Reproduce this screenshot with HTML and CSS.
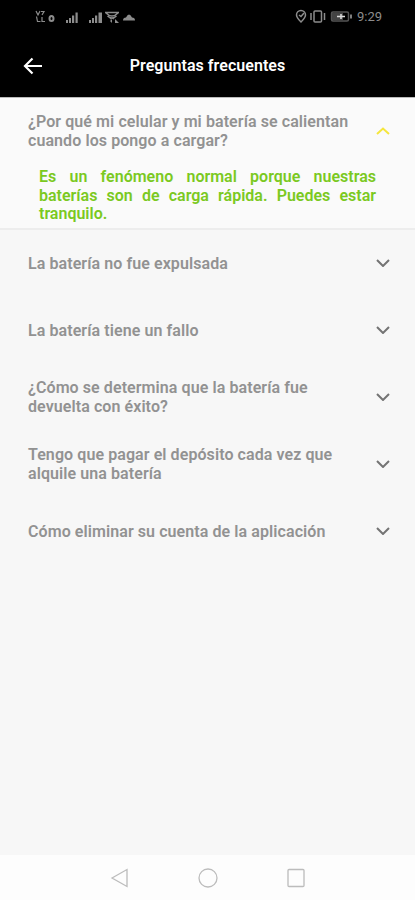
FILE: index.html
```html
<!DOCTYPE html>
<html lang="es">
<head>
<meta charset="utf-8">
<title>Preguntas frecuentes</title>
<link rel="stylesheet" href="styles.css">
</head>
<body>
<div class="status">
  <svg class="status-left" width="102" height="18" viewBox="0 0 102 18" fill="#8c8c8c">
    <g fill="none" stroke="#8c8c8c" stroke-width="1.2">
      <path d="M2 3l2 4 2-4M7 3.500h3L8 7M2.500 8.500l1 5h3M8 9v4.500h3"/>
      <ellipse cx="17.500" cy="10.500" rx="2" ry="2.500" stroke-width="2"/>
      <path d="M71 4.500h14M72 5q6 6 12 0M73.500 8q4.500 4 9 0M76 11q2-2 4 0" stroke-width="1.400"/>
    </g>
    <path d="M32 12h2v3h-2zM35 10h2v5h-2zM38 7.500h2.200V15H38zM41.500 4.500h2.200V15h-2.200z"/>
    <path d="M55 12h2v3h-2zM58 10h2v5h-2zM61 7.500h2.200V15H61zM64.500 4.500h3.500V15h-3.500z"/>
    <path d="M76 13l2-2v4zM81 11l4 4h-4zM89 12.500q0-3 3-3 3-6 6 0 3 0 3 3z"/>
  </svg>
  <div class="status-right">
    <svg width="58" height="18" viewBox="0 0 58 18" fill="none" stroke="#8c8c8c" stroke-width="1.500">
      <path d="M6 14C3 11 1.500 9 1.500 7a4.500 4.500 0 0 1 9 0c0 2-1.500 4-4.500 7z"/>
      <path d="M4 7l2 1.500L9 5"/>
      <rect x="19" y="3" width="7.500" height="11" rx="1"/>
      <path d="M16 5v7M29.500 5v7"/>
      <rect x="36.500" y="4" width="17" height="9" rx="1.500" stroke="#555"/>
      <path d="M37 5h11v7H37z" fill="#444" stroke="none"/>
      <path d="M56 6.500v4" stroke-width="1.800"/>
      <path d="M42 8.500h8M46 6v5" stroke="#ddd"/>
    </svg>
    <span class="time">9:29</span>
  </div>
</div>
<header class="bar">
  <svg class="back" width="20" height="18" viewBox="0 0 20 18"><path d="M19 9H2M9.500 1.500L2 9l7.500 7.500"/></svg>
  <h1>Preguntas frecuentes</h1>
</header>
<main>
  <section class="open">
    <div class="row">
      <p>¿Por qué mi celular y mi batería se calientan cuando los pongo a cargar?</p>
      <svg class="chev up" width="14" height="8" viewBox="0 0 14 8"><path d="M1 7l6-5.500L13 7"/></svg>
    </div>
    <p class="answer">Es un fenómeno normal porque nuestras baterías son de carga rápida. Puedes estar tranquilo.</p>
  </section>
  <div class="row"><p>La batería no fue expulsada</p><svg class="chev" width="14" height="8" viewBox="0 0 14 8"><path d="M1 1l6 6 6-6"/></svg></div>
  <div class="row"><p>La batería tiene un fallo</p><svg class="chev" width="14" height="8" viewBox="0 0 14 8"><path d="M1 1l6 6 6-6"/></svg></div>
  <div class="row"><p>¿Cómo se determina que la batería fue devuelta con éxito?</p><svg class="chev" width="14" height="8" viewBox="0 0 14 8"><path d="M1 1l6 6 6-6"/></svg></div>
  <div class="row"><p>Tengo que pagar el depósito cada vez que alquile una batería</p><svg class="chev" width="14" height="8" viewBox="0 0 14 8"><path d="M1 1l6 6 6-6"/></svg></div>
  <div class="row"><p>Cómo eliminar su cuenta de la aplicación</p><svg class="chev" width="14" height="8" viewBox="0 0 14 8"><path d="M1 1l6 6 6-6"/></svg></div>
</main>
<nav class="nav">
  <svg width="20" height="20" viewBox="0 0 20 20"><path d="M2 10L17 1.500v17z"/></svg>
  <svg width="20" height="20" viewBox="0 0 20 20"><circle cx="10" cy="10" r="9"/></svg>
  <svg width="20" height="20" viewBox="0 0 20 20"><rect x="2" y="1.500" width="16" height="17" rx="1"/></svg>
</nav>
</body>
</html>
```
FILE: styles.css
```css
* { box-sizing: border-box; }
body {
  margin: 0;
  height: 900px;
  display: flex;
  flex-direction: column;
  overflow: hidden;
  background: #f7f7f7;
  font-family: Roboto, "Liberation Sans", sans-serif;
}
p, h1 { margin: 0; }
.status {
  height: 34px;
  background: #000;
  display: flex;
  justify-content: space-between;
  align-items: center;
  padding: 0 33px 0 34px;
}
.status-right { display: flex; align-items: center; gap: 4px; }
.status svg { display: block; }
.time { color: #8c8c8c; font-size: 13px; line-height: 18px; }
.bar {
  height: 63px;
  background: #000;
  display: grid;
  grid-template-columns: 65px 1fr 65px;
  align-items: center;
  color: #fff;
}
.back { margin-left: 23px; fill: none; stroke: #fff; stroke-width: 2.2; }
h1 { text-align: center; font-size: 16px; font-weight: 600; line-height: 20px; letter-spacing: 0.05px; white-space: nowrap; }
main { flex: 1; border-top: 1px solid #bbb; }
.open {
  height: 132px;
  background: #fafafa;
  border-bottom: 2px solid #ededed;
}
.row {
  height: 67px;
  display: flex;
  align-items: center;
  justify-content: space-between;
  padding: 0 25px 0 28px;
}
.row p {
  width: 330px;
  padding-top: 1px;
  color: #929292;
  font-size: 16px;
  font-weight: 600;
  line-height: 18.7px;
  letter-spacing: 0.08px;
}
.chev { margin-bottom: 2px; fill: none; stroke: #747474; stroke-width: 2; }
.chev.up { stroke: #f5e63c; }
.answer {
  margin: 3px 39px 0 39px;
  color: #7bc91f;
  font-size: 16px;
  font-weight: 600;
  line-height: 18.5px;
  text-align: justify;
}
.nav {
  height: 45px;
  background: #fdfdfd;
  display: flex;
  justify-content: center;
  align-items: center;
  gap: 68px;
}
.nav svg { fill: none; stroke: #bcbcbc; stroke-width: 1.3; }
```
